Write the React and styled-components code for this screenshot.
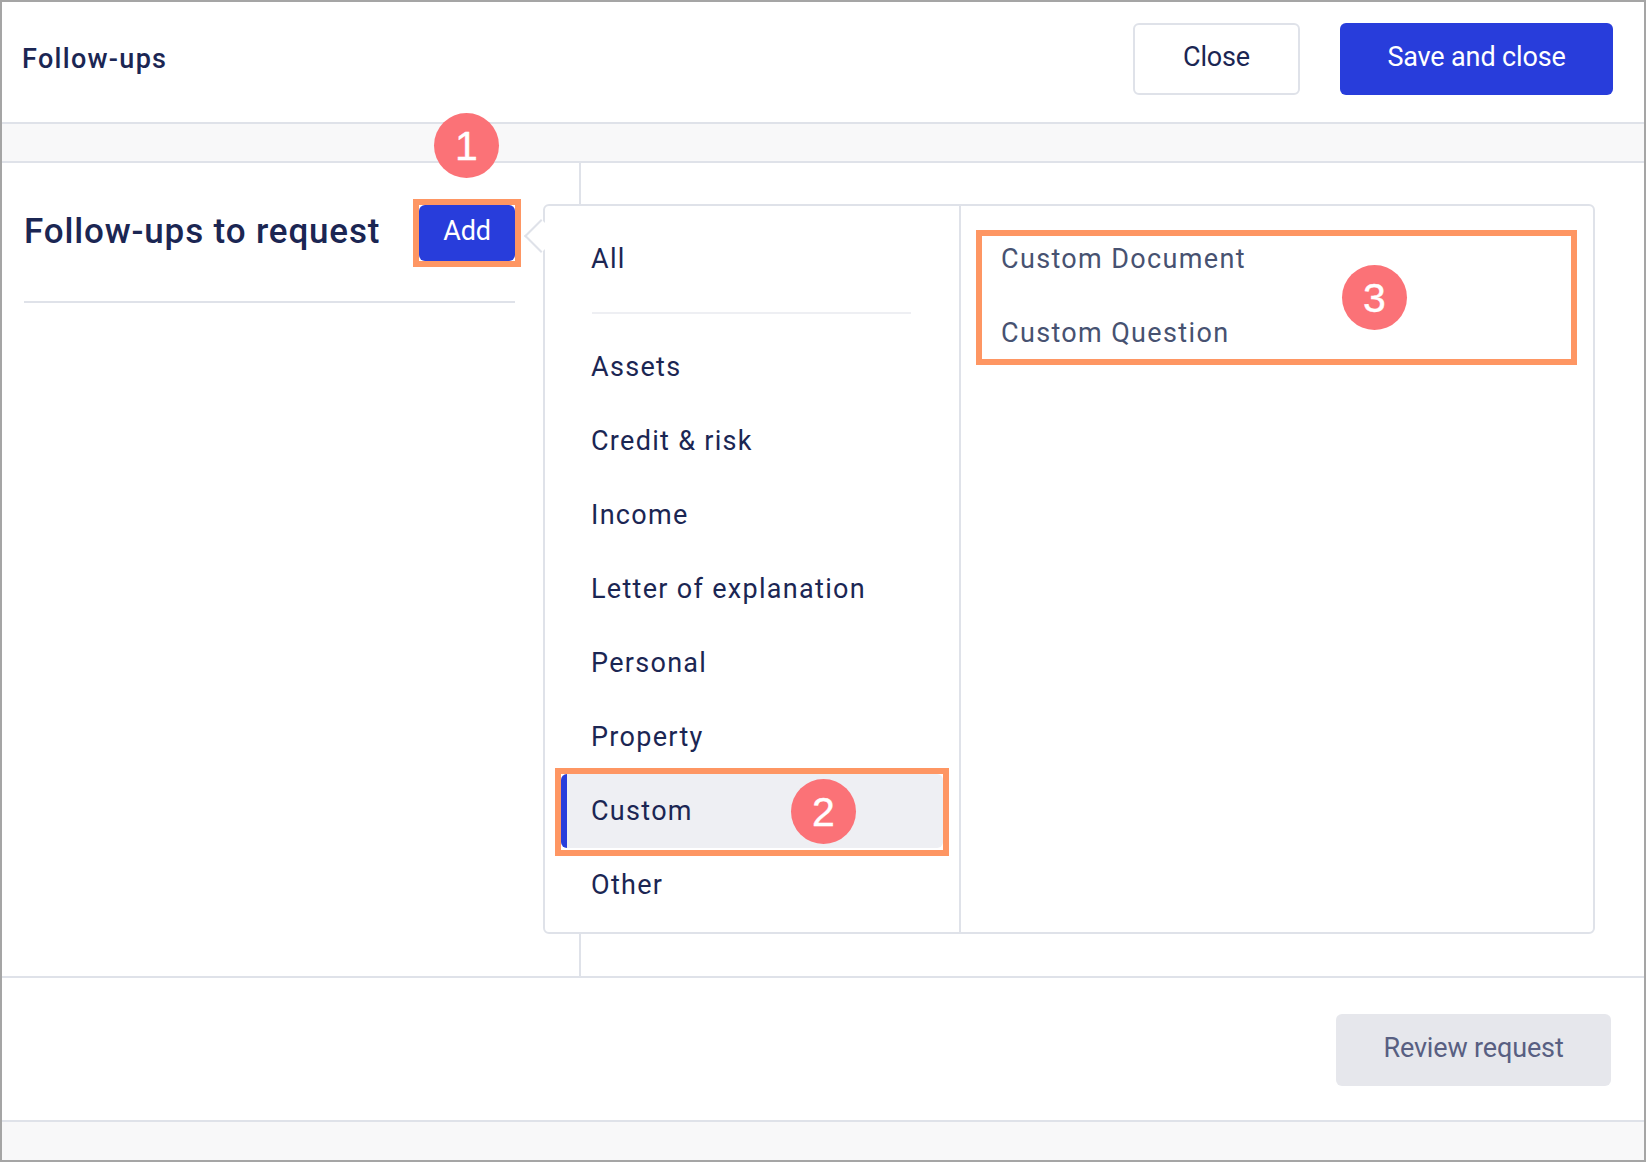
import React from "react";
import styled, { createGlobalStyle } from "styled-components";

const categories = ["Assets", "Credit & risk", "Income", "Letter of explanation", "Personal", "Property", "Custom", "Other"];
const followUps = ["Custom Document", "Custom Question"];

const App = () => {
  return (
    <>
      <GlobalStyle />
      <Frame>
        <Header>
          <PageTitle>Follow-ups</PageTitle>
          <HeaderActions>
            <OutlineButton type="button">Close</OutlineButton>
            <PrimaryButton type="button">Save and close</PrimaryButton>
          </HeaderActions>
        </Header>
        <Band />
        <Main>
          <LeftColumn>
            <LeftHeading>
              <SectionTitle>Follow-ups to request</SectionTitle>
              <AddCallout>
                <AddButton type="button">Add</AddButton>
                <Badge $top="-92px" $left="15px">1</Badge>
              </AddCallout>
            </LeftHeading>
            <Divider />
          </LeftColumn>

          <Popover>
            <Arrow />
            <CategoryPane>
              <CategoryRow>All</CategoryRow>
              <MenuRule />
              {categories.map((name) => (
                <CategoryRow key={name} $active={name === "Custom"}>
                  {name}
                  {name === "Custom" && (
                    <>
                      <CalloutBox $inset="-6px -6px -8px -6px" />
                      <Badge $top="5px" $left="230px">2</Badge>
                    </>
                  )}
                </CategoryRow>
              ))}
            </CategoryPane>
            <ItemPane>
              {followUps.map((name) => (
                <ItemRow key={name}>{name}</ItemRow>
              ))}
              <CalloutBox $inset="24px 16px auto 15px" $height="135px" />
              <Badge $top="59px" $left="381px">3</Badge>
            </ItemPane>
          </Popover>
        </Main>
        <Footer>
          <DisabledButton type="button">Review request</DisabledButton>
        </Footer>
        <Band $last />
      </Frame>
    </>
  );
};

export default App;

const GlobalStyle = createGlobalStyle`
  * {
    box-sizing: border-box;
  }
  html,
  body {
    margin: 0;
    padding: 0;
    background: #ffffff;
  }
  body {
    font-family: Roboto, "Liberation Sans", sans-serif;
    color: #1b2653;
  }
`;

const Frame = styled.div`
  width: 1646px;
  height: 1162px;
  display: flex;
  flex-direction: column;
  border: 2px solid #a5a5a5;
  background: #ffffff;
  overflow: hidden;
`;

const Header = styled.header`
  height: 122px;
  flex: none;
  display: flex;
  align-items: flex-start;
  justify-content: space-between;
  padding: 21px 31px 0 20px;
  border-bottom: 2px solid #dfe2e9;
`;

const PageTitle = styled.h1`
  margin: 0;
  height: 72px;
  display: flex;
  align-items: center;
  font-size: 27px;
  font-weight: 500;
  letter-spacing: 1.3px;
  color: #1b2653;
`;

const HeaderActions = styled.div`
  display: flex;
  gap: 40px;
`;

const BaseButton = styled.button`
  height: 72px;
  padding: 0 0 4px;
  border: 0;
  border-radius: 6px;
  font-family: Roboto, sans-serif;
  font-size: 27px;
  font-weight: 400;
  letter-spacing: -0.15px;
`;

const OutlineButton = styled(BaseButton)`
  width: 167px;
  background: #ffffff;
  border: 2px solid #dfe2e9;
  color: #1b2653;
`;

const PrimaryButton = styled(BaseButton)`
  width: 273px;
  background: #283ddb;
  color: #ffffff;
`;

const DisabledButton = styled(BaseButton)`
  width: 275px;
  background: #e6e7ec;
  color: #585f82;
`;

const Band = styled.div`
  height: ${(props) => (props.$last ? "auto" : "39px")};
  flex: ${(props) => (props.$last ? "1" : "none")};
  background: #f8f8f9;
  border-bottom: ${(props) => (props.$last ? "0" : "2px solid #dfe2e9")};
`;

const Main = styled.main`
  position: relative;
  flex: none;
  height: 815px;
  display: flex;
  border-bottom: 2px solid #dfe2e9;
`;

const LeftColumn = styled.section`
  width: 579px;
  padding: 36px 64px 0 22px;
  border-right: 2px solid #dfe2e9;
`;

const LeftHeading = styled.div`
  display: flex;
  align-items: center;
  justify-content: space-between;
  height: 68px;
  margin-bottom: 34px;
`;

const SectionTitle = styled.h2`
  margin: 0 0 4px;
  font-size: 35px;
  font-weight: 500;
  letter-spacing: 0.85px;
  color: #1b2653;
`;

const AddCallout = styled.div`
  position: relative;
  margin-right: -6px;
  border: 6px solid #fe9663;
  background: #ffffff;
`;

const AddButton = styled.button`
  display: block;
  width: 96px;
  height: 56px;
  padding: 0 0 4px;
  border: 0;
  border-radius: 6px;
  background: #283ddb;
  color: #ffffff;
  font-family: Roboto, sans-serif;
  font-size: 27px;
  letter-spacing: -0.15px;
`;

const Divider = styled.div`
  height: 2px;
  background: #dfe2e9;
`;

const Badge = styled.span`
  position: absolute;
  top: ${(props) => props.$top};
  left: ${(props) => props.$left};
  width: 65px;
  height: 65px;
  display: flex;
  align-items: center;
  justify-content: center;
  padding-top: 2px;
  border-radius: 50%;
  background: #fb7277;
  color: #ffffff;
  font-family: "Liberation Sans", Arial, sans-serif;
  font-size: 41px;
  font-weight: 400;
  letter-spacing: 0;
  -webkit-text-stroke: 0.4px #ffffff;
`;

const CalloutBox = styled.div`
  position: absolute;
  inset: ${(props) => props.$inset};
  height: ${(props) => props.$height || "auto"};
  border: 6px solid #fe9663;
  pointer-events: none;
`;

const Popover = styled.div`
  position: absolute;
  top: 41px;
  left: 541px;
  width: 1052px;
  height: 730px;
  display: flex;
  background: #ffffff;
  border: 2px solid #dfe2e9;
  border-radius: 6px;
`;

const Arrow = styled.span`
  position: absolute;
  top: 18px;
  left: -16px;
  width: 24px;
  height: 24px;
  background: #ffffff;
  border-left: 2px solid #dfe2e9;
  border-bottom: 2px solid #dfe2e9;
  transform: rotate(45deg);
`;

const CategoryPane = styled.nav`
  width: 416px;
  flex: none;
  padding: 16px 16px 0 16px;
  border-right: 2px solid #dfe2e9;
`;

const CategoryRow = styled.div`
  position: relative;
  height: 74px;
  display: flex;
  align-items: center;
  padding-left: 30px;
  font-size: 27px;
  letter-spacing: 1.3px;
  color: #1b2653;
  border-radius: 6px;
  background: ${(props) => (props.$active ? "#eeeff3" : "transparent")};

  &::before {
    content: ${(props) => (props.$active ? '""' : "none")};
    position: absolute;
    top: 0;
    bottom: 0;
    left: 0;
    width: 6px;
    background: #283ddb;
    border-radius: 6px 0 0 6px;
  }
`;

const MenuRule = styled.div`
  height: 2px;
  margin: 16px 32px 16px 31px;
  background: #eeeff3;
`;

const ItemPane = styled.div`
  position: relative;
  flex: 1;
  padding: 16px 0 0 40px;
`;

const ItemRow = styled.div`
  height: 74px;
  display: flex;
  align-items: center;
  font-size: 27px;
  letter-spacing: 1.35px;
  color: #475271;
`;

const Footer = styled.footer`
  height: 144px;
  flex: none;
  display: flex;
  justify-content: flex-end;
  padding: 36px 33px 0 0;
  border-bottom: 2px solid #dfe2e9;
`;
